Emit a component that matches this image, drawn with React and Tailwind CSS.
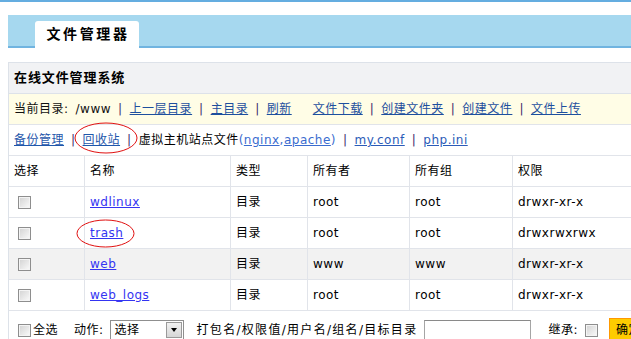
import React from "react";

const FONT = "font-['DejaVu_Sans','Noto_Sans_CJK_SC',sans-serif]";

const ROWS = [
    { name: "wdlinux", type: "目录", owner: "root", group: "root", perm: "drwxr-xr-x" },
    { name: "trash", type: "目录", owner: "root", group: "root", perm: "drwxrwxrwx" },
    { name: "web", type: "目录", owner: "www", group: "www", perm: "drwxr-xr-x", alt: true },
    { name: "web_logs", type: "目录", owner: "root", group: "root", perm: "drwxr-xr-x" },
];

const Sep = () => <span className="mx-[7px] text-[#3a2a6a]">|</span>;

const Box = () => (
    <span className="inline-block shrink-0 w-[13px] h-[13px] border border-[#8e8e8e] bg-gradient-to-br from-[#d2d2d2] to-[#fbfbfb] shadow-[inset_0_0_0_1px_#f4f4f4]" />
);

const Cell = ({ children, last, className = "" }) => (
    <div className={`flex items-center h-[31px] px-[5px] border-b border-[#e1e4ea] ${last ? "" : "border-r"} ${className}`}>
        {children}
    </div>
);

const App = () => {
    return (
        <div className={`relative w-[631px] h-[339px] overflow-hidden bg-white text-[12px] tracking-[0.5px] text-black ${FONT}`}>
            {/* top line */}
            <div className="h-[2px] bg-[#64ade0]" />

            {/* tab band */}
            <div className="mt-[13px] ml-[8px] h-[33px] bg-[#a6d8ef] border-b-2 border-[#70b4e0] flex items-end">
                <div className="ml-[27px] -mb-[2px] w-[104px] h-[27px] bg-white rounded-t-[3px] flex items-center justify-center text-[14px] font-bold tracking-[2.6px] pl-[2px]">
                    文件管理器
                </div>
            </div>

            {/* panel */}
            <div className="mt-[14px] ml-[8px] w-[640px] border-l border-t border-[#dde2e9]">
                <div className="h-[31px] bg-[#f1f2f4] border-b border-[#dde2e9] flex items-center pl-[5px] text-[13px] font-bold tracking-[0.9px]">
                    在线文件管理系统
                </div>

                <div className="h-[31px] bg-[#fffde6] border-b border-[#e1e4ea] flex items-center pl-[5px] text-[#111] whitespace-nowrap">
                    <span>当前目录:</span>
                    <span className="ml-[7px]">/www</span>
                    <Sep />
                    <a className="underline text-[#1d4f9e]">上一层目录</a>
                    <Sep />
                    <a className="underline text-[#1d4f9e]">主目录</a>
                    <Sep />
                    <a className="underline text-[#1d4f9e]">刷新</a>
                    <a className="ml-[21px] underline text-[#1d4f9e]">文件下载</a>
                    <Sep />
                    <a className="underline text-[#1d4f9e]">创建文件夹</a>
                    <Sep />
                    <a className="underline text-[#1d4f9e]">创建文件</a>
                    <Sep />
                    <a className="underline text-[#1d4f9e]">文件上传</a>
                </div>

                <div className="h-[31px] bg-white border-b border-[#e1e4ea] flex items-center pl-[5px] whitespace-nowrap">
                    <a className="underline text-[#1f57ab]">备份管理</a>
                    <Sep />
                    <a className="underline text-[#1f57ab]">回收站</a>
                    <Sep />
                    <span>虚拟主机站点文件</span>
                    <span className="text-[#3a6ccf]">(</span>
                    <a className="underline text-[#3a6ccf]">nginx</a>
                    <span className="text-[#3a6ccf]">,</span>
                    <a className="underline text-[#3a6ccf]">apache</a>
                    <span className="text-[#3a6ccf]">)</span>
                    <Sep />
                    <a className="underline text-[#2b5bb8]">my.conf</a>
                    <Sep />
                    <a className="underline text-[#2b5bb8]">php.ini</a>
                </div>

                {/* file table */}
                <div className="grid grid-cols-[76px_146px_77px_102px_103px_1fr]">
                    <Cell>选择</Cell>
                    <Cell>名称</Cell>
                    <Cell>类型</Cell>
                    <Cell>所有者</Cell>
                    <Cell>所有组</Cell>
                    <Cell last>权限</Cell>

                    {ROWS.map(r => {
                        const bg = r.alt ? "bg-[#f2f2f2]" : "bg-white";
                        return (
                            <React.Fragment key={r.name}>
                                <Cell className={`${bg} pl-[9px]`}><Box /></Cell>
                                <Cell className={bg}>
                                    <a className="underline text-[#3434f2]">{r.name}</a>
                                </Cell>
                                <Cell className={bg}>{r.type}</Cell>
                                <Cell className={bg}>{r.owner}</Cell>
                                <Cell className={bg}>{r.group}</Cell>
                                <Cell last className={bg}>{r.perm}</Cell>
                            </React.Fragment>
                        );
                    })}
                </div>

                {/* actions */}
                <div className="h-[38px] flex items-center pl-[9px] whitespace-nowrap">
                    <Box />
                    <span className="ml-[2px] shrink-0">全选</span>
                    <span className="ml-[16px] shrink-0">动作:</span>
                    <div className="ml-[6px] shrink-0 w-[74px] h-[20px] border border-[#8f8f8f] bg-white flex items-center justify-between">
                        <span className="pl-[4px]">选择</span>
                        <span className="w-[16px] h-[16px] mr-px bg-gradient-to-b from-[#f2f2f2] to-[#d6d6d6] border border-[#9a9a9a] flex items-center justify-center">
                            <span className="w-0 h-0 border-l-[3.5px] border-r-[3.5px] border-t-[4px] border-l-transparent border-r-transparent border-t-black" />
                        </span>
                    </div>
                    <span className="ml-[13px] shrink-0 tracking-[1.3px]">打包名/权限值/用户名/组名/目标目录</span>
                    <div className="ml-[7px] shrink-0 w-[107px] h-[21px] border border-[#a5a5a5] border-t-[#8a8a8a] bg-white" />
                    <span className="ml-[17px] shrink-0">继承:</span>
                    <span className="ml-[7px] flex shrink-0"><Box /></span>
                    <button className="ml-[11px] h-[24px] px-[6px] bg-[#ffcc00] border border-[#ff9900] text-[12px] shrink-0">
                        确定
                    </button>
                </div>
            </div>

            {/* red annotation ellipses */}
            <svg className="absolute left-0 top-0 pointer-events-none" width="631" height="339">
                <ellipse cx="106" cy="138" rx="31" ry="15" fill="none" stroke="#e01010" strokeWidth="1" />
                <ellipse cx="105.5" cy="233.5" rx="28.5" ry="13.5" fill="none" stroke="#e01010" strokeWidth="1" />
            </svg>
        </div>
    );
};

export default App;
